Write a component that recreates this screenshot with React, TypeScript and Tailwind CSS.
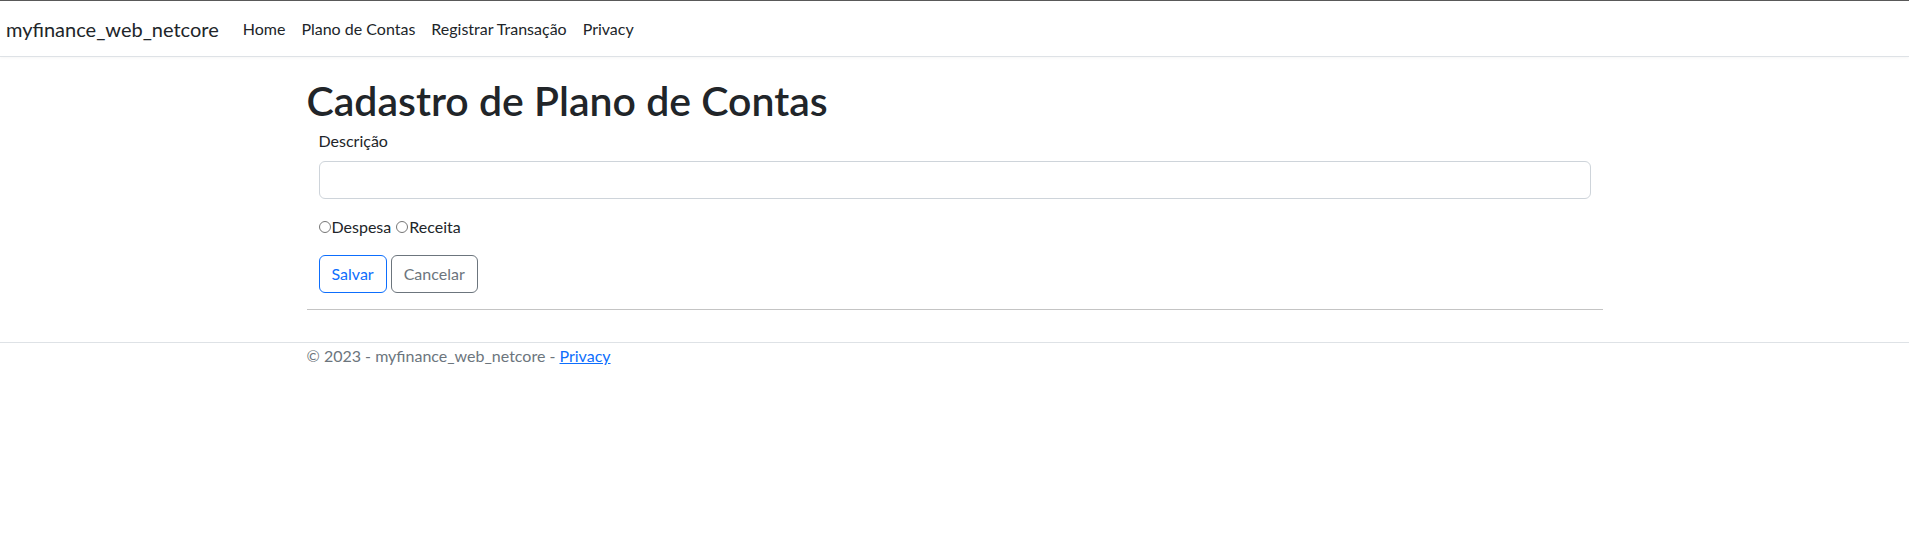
import React from "react";

const font = { fontFamily: 'Lato, "Noto Sans", Arial, sans-serif' };

export default function App() {
  return (
    <div className="min-h-[549px] bg-white text-[#212529] border-t border-[#5a5a5a]" style={font}>
      <header>
        <nav className="flex h-[56px] items-center border-b border-[#dee2e6] bg-white pl-[6px] shadow-[0_1px_3px_rgba(0,0,0,0.04)]">
          <a href="#" className="mr-4 py-[5px] text-[20px] leading-[1.5] text-[#212529]">
            myfinance_web_netcore
          </a>
          <ul className="flex items-center text-[16px] leading-[1.5]">
            <li><a href="#" className="block px-2 py-2 text-[#212529]">Home</a></li>
            <li><a href="#" className="block px-2 py-2 text-[#212529]">Plano de Contas</a></li>
            <li><a href="#" className="block px-2 py-2 text-[#212529]">Registrar Transação</a></li>
            <li><a href="#" className="block px-2 py-2 text-[#212529]">Privacy</a></li>
          </ul>
        </nav>
      </header>

      <div className="mx-auto w-[1320px] px-3">
        <main className="pt-[19px] pb-4">
          <h1 className="mb-[4px] text-[41px] font-semibold leading-[1.2]">Cadastro de Plano de Contas</h1>

          <form className="px-3 text-[16px] leading-[1.5]">
            <div className="mb-4">
              <label className="mb-2 block">Descrição</label>
              <input
                type="text"
                className="block h-[38px] w-full rounded-[6px] border border-[#ced4da] px-3 outline-none"
              />
            </div>

            <div className="mb-4 flex items-center">
              <span className="mr-[1px] inline-block h-[12px] w-[12px] rounded-full border border-[#767676]" />
              <span>Despesa</span>
              <span className="ml-[5px] mr-[1px] inline-block h-[12px] w-[12px] rounded-full border border-[#767676]" />
              <span>Receita</span>
            </div>

            <div className="flex gap-1">
              <button type="button" className="h-[38px] rounded-[6px] border border-[#0d6efd] px-3 text-[#0d6efd]">
                Salvar
              </button>
              <button type="button" className="h-[38px] rounded-[6px] border border-[#6c757d] px-3 text-[#6c757d]">
                Cancelar
              </button>
            </div>
          </form>

          <hr className="my-4 border-t border-[#c4c4c4]" />
        </main>
      </div>

      <footer className="border-t border-[#dee2e6] text-[16px] leading-[24px] text-[#6c757d]">
        <div className="mx-auto w-[1320px] px-3 pt-[1px]">
          © 2023 - myfinance_web_netcore - <a href="#" className="text-[#0d6efd] underline">Privacy</a>
        </div>
      </footer>
    </div>
  );
}
